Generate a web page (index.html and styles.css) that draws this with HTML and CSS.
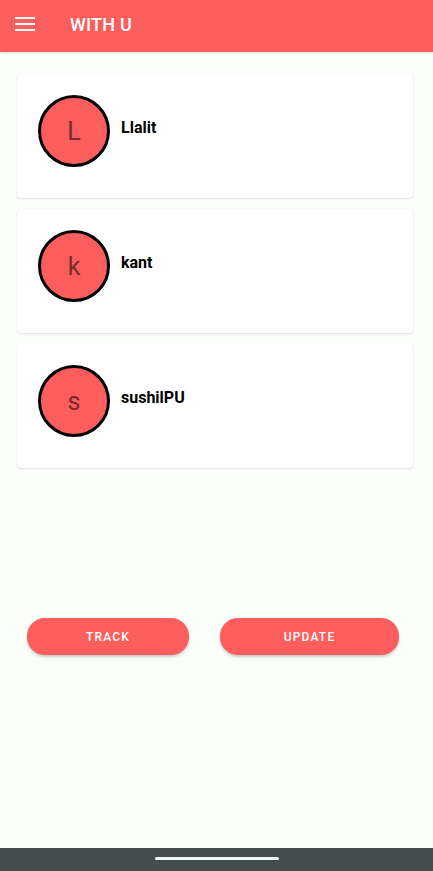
FILE: index.html
```html
<!DOCTYPE html>
<html>
<head>
<meta charset="utf-8">
<link rel="stylesheet" href="styles.css">
</head>
<body>
<div class="screen">
  <header class="appbar">
    <svg class="menu" width="20" height="16" viewBox="0 0 20 16"><rect x="0" y="1" width="20" height="2" fill="#fff"/><rect x="0" y="7" width="20" height="2" fill="#fff"/><rect x="0" y="13" width="20" height="2" fill="#fff"/></svg>
    <span class="title">WITH U</span>
  </header>
  <main class="content">
    <div class="list">
      <div class="card"><div class="avatar">L</div><div class="name">Llalit</div></div>
      <div class="card"><div class="avatar">k</div><div class="name">kant</div></div>
      <div class="card"><div class="avatar">s</div><div class="name">sushilPU</div></div>
    </div>
    <div class="actions">
      <button class="btn btn-track">TRACK</button>
      <button class="btn btn-update">UPDATE</button>
    </div>
  </main>
  <footer class="navbar"><div class="handle"></div></footer>
</div>
</body>
</html>
```
FILE: styles.css
```css
html, body { margin: 0; padding: 0; }
body { background: #fcfefc; font-family: Roboto, "Noto Sans", sans-serif; }
.screen { height: 871px; display: flex; flex-direction: column; }
.appbar {
  height: 52px; background: #fb5e5c; display: flex; align-items: center;
  padding-left: 15px; box-shadow: 0 1px 3px rgba(0,0,0,0.15); position: relative; z-index: 1;
}
.menu { margin-top: -4px; }
.title { color: #fff; font-size: 18px; font-weight: 500; margin-left: 35px; margin-top: -4px; letter-spacing: 0.2px; }
.content { flex: 1; }
.list { padding: 22px 20px 0 17px; display: flex; flex-direction: column; gap: 11px; }
.card {
  height: 124px; background: #fff; border-radius: 4px; box-sizing: border-box;
  box-shadow: 0 1px 2px rgba(0,0,0,0.12), 0 0 1px rgba(0,0,0,0.08);
  display: flex; align-items: flex-start; padding: 21px 0 0 21px;
}
.avatar {
  width: 66px; height: 66px; border: 3px solid #000; border-radius: 50%;
  background: #fb5e5c; color: #7a2a2a; font-size: 25px; display: flex;
  align-items: center; justify-content: center; flex-shrink: 0;
}
.name { font-size: 16px; font-weight: 700; color: #000; margin-left: 11px; margin-top: 23px; }
.actions { display: flex; padding-left: 27px; margin-top: 150px; gap: 31px; }
.btn {
  height: 37px; border: none; border-radius: 18px; background: #fb5e5c; color: #fff;
  font-family: Roboto, sans-serif; font-size: 12px; font-weight: 500; letter-spacing: 1.2px;
  box-shadow: 0 2px 3px rgba(0,0,0,0.2);
}
.btn-track { width: 162px; }
.btn-update { width: 179px; }
.navbar { height: 23px; background: #434d4d; display: flex; justify-content: center; align-items: flex-start; }
.handle { width: 124px; height: 3px; border-radius: 2px; background: #f4f4f4; margin-top: 9px; }
```
